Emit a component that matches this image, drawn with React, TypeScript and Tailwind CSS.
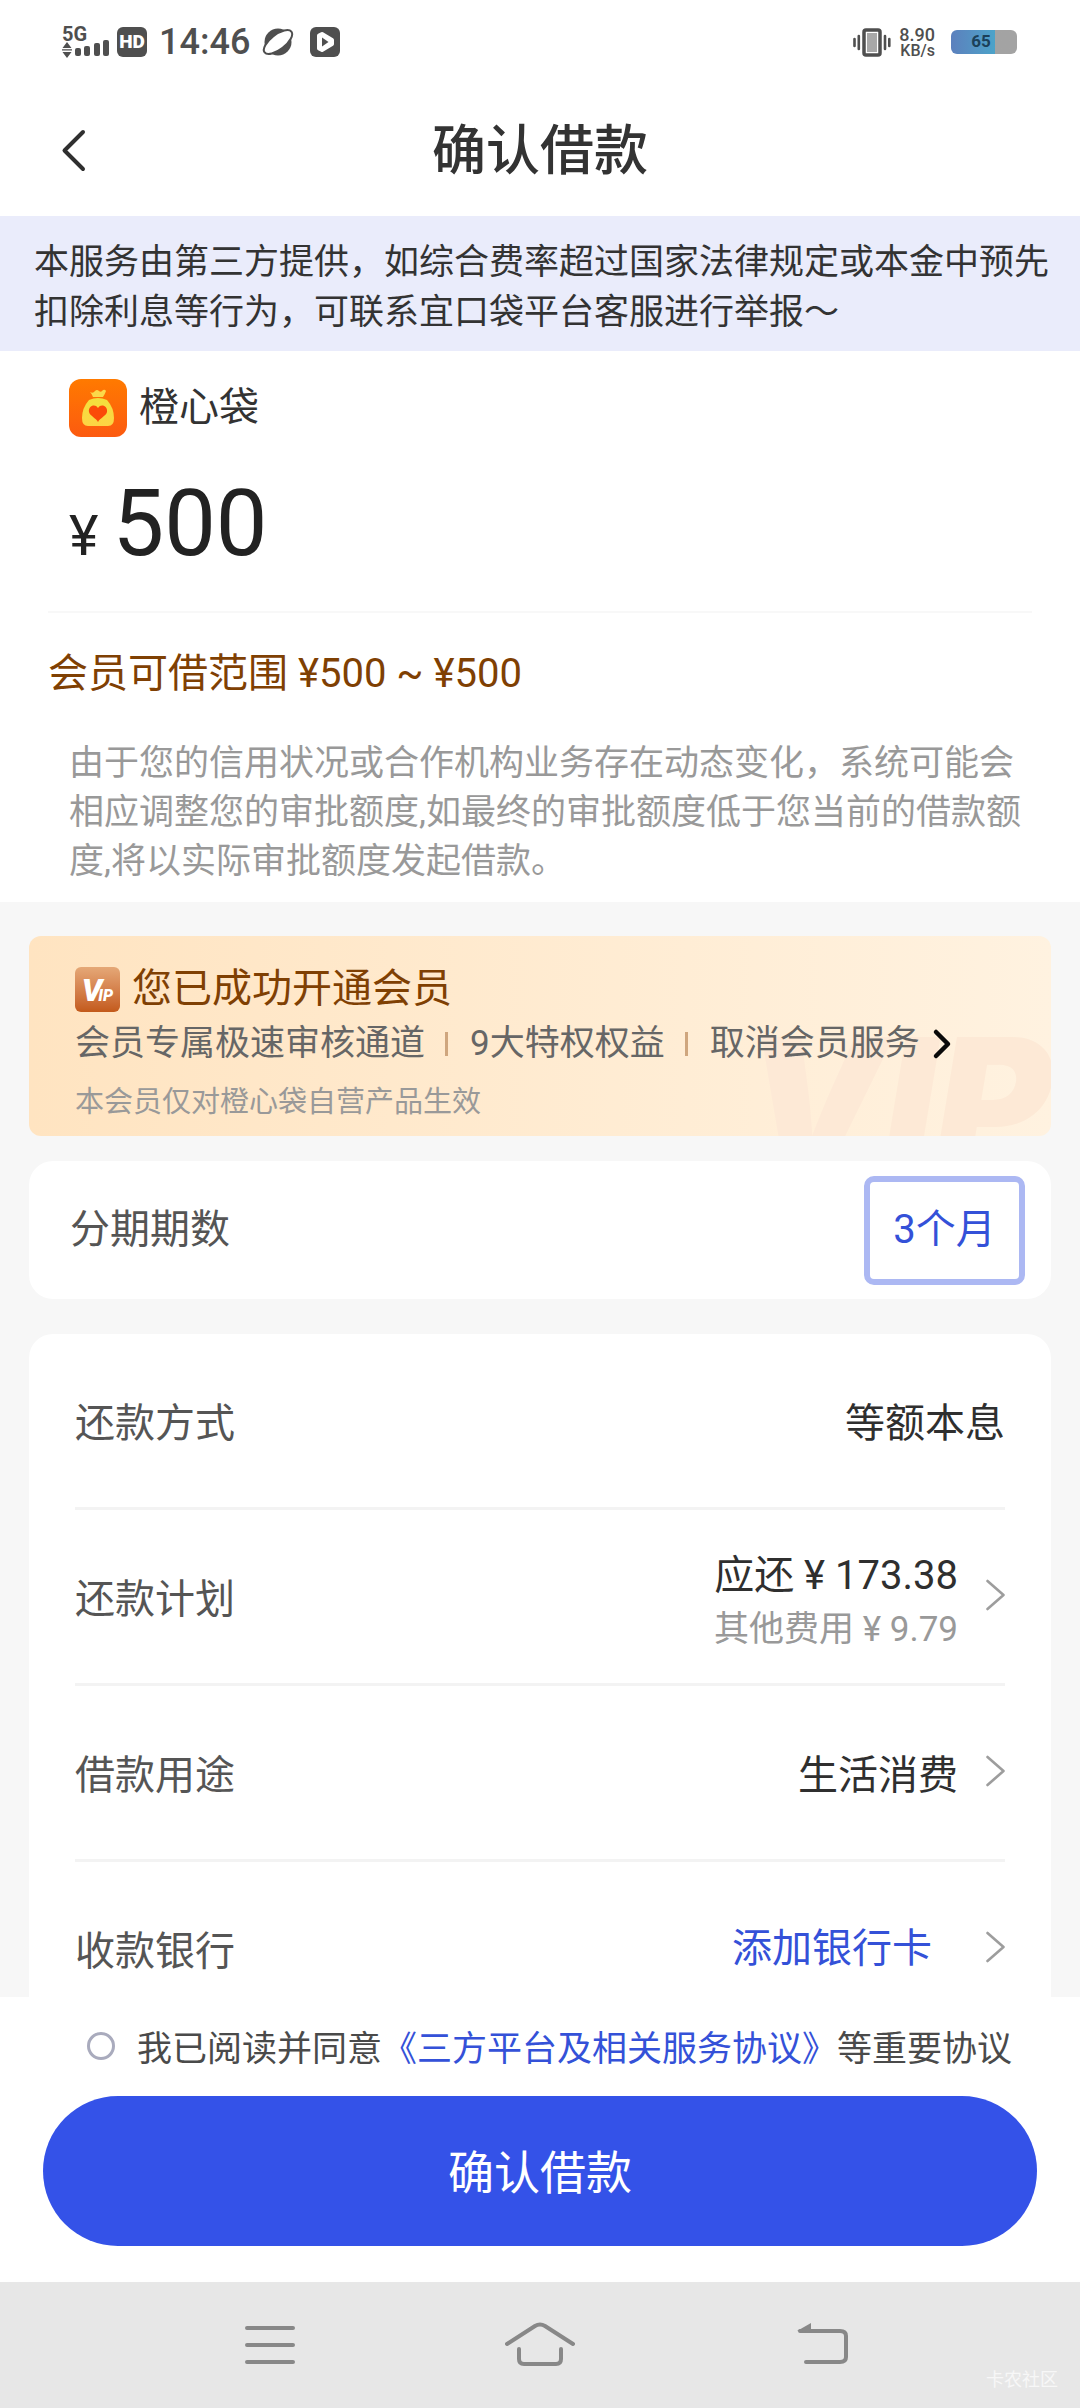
import { ReactNode, useState } from "react";

const StatusBar = () => {
  return (
    <div className="flex h-[84px] items-center justify-between pl-[62px] pr-[63px] font-medium text-[#4f4f4f]">
      <div className="flex items-center">
        <div className="flex w-[49px] flex-col">
          <span className="h-4 text-[20px] font-bold leading-4">5G</span>
          <svg className="h-4 w-12 overflow-visible" viewBox="0 0 48 16" fill="currentColor">
            <path d="M5 0l4.500 6h-9zM5 16l4.500-6h-9zM0 7.200h10v1.400h-10z" />
            <rect x="13" y="6" width="6" height="8" rx="2" />
            <rect x="22" y="4" width="6" height="10" rx="2" />
            <rect x="32" y="1" width="6" height="13" rx="2" />
            <rect x="41" y="-2" width="6" height="16" rx="2" />
          </svg>
        </div>
        <span className="ml-1.5 flex size-[30px] items-center justify-center rounded-md bg-[#4f4f4f] text-[19px] font-black text-white">
          HD
        </span>
        <span className="ml-3 text-[36px] leading-10">14:46</span>
        <svg className="ml-3 size-8 overflow-visible" viewBox="0 0 32 32">
          <circle cx="16" cy="16" r="13.500" fill="#4f4f4f" />
          <ellipse
            cx="16"
            cy="16"
            rx="17"
            ry="7.500"
            transform="rotate(-38 16 16)"
            fill="#fff"
            stroke="#4f4f4f"
            strokeWidth="2"
          />
        </svg>
        <svg className="ml-4 size-[30px]" viewBox="0 0 30 30">
          <rect width="30" height="30" rx="6" fill="#4f4f4f" />
          <path
            d="M9 8.500l3-1.500 10 6v4l-10 6-3-1.500z"
            fill="#fff"
            stroke="#fff"
            strokeWidth="4"
            strokeLinejoin="round"
          />
          <path d="M12 10.500l6.500 4.500-6.500 4.500z" fill="#4f4f4f" />
        </svg>
      </div>
      <div className="flex items-center">
        <svg className="h-[30px] w-[38px]" viewBox="0 0 38 30">
          <rect x="11" y="3" width="16" height="25" rx="2" fill="#fff" stroke="#4f4f4f" strokeWidth="3.500" />
          <rect x="14" y="6" width="10" height="19" fill="#a8a8a8" />
          <path
            d="M1.500 12v7M5.800 9v13M32 9v13M36.300 12v7"
            stroke="#4f4f4f"
            strokeWidth="2.600"
            strokeLinecap="round"
          />
        </svg>
        <div className="ml-2 flex flex-col items-end pt-0.5">
          <span className="text-[18px] leading-4">8.90</span>
          <span className="text-[16px] leading-4">KB/s</span>
        </div>
        <div className="ml-4 flex h-6 w-[66px] items-center justify-center rounded-md bg-linear-to-r from-[#5b80bd] from-0% via-[#4ba3c9] via-67% to-[#a3a3a3] to-67% pr-1.5 text-[17px] font-bold text-[#1b4059]">
          65
        </div>
      </div>
    </div>
  );
};

const Header = () => {
  return (
    <header className="grid h-[132px] grid-cols-3 items-center px-[60px]">
      <button className="w-fit" aria-label="返回">
        <svg className="h-11 w-7" viewBox="0 0 28 44" fill="none">
          <path
            d="M23 4L4.500 22.500L23 41"
            stroke="#2f2f2f"
            strokeWidth="4"
            strokeLinecap="round"
            strokeLinejoin="round"
          />
        </svg>
      </button>
      <h1 className="whitespace-nowrap pt-1 text-center text-[54px] font-medium leading-[64px] text-[#333333]">
        确认借款
      </h1>
    </header>
  );
};

const AppLogo = () => {
  return (
    <svg className="size-[58px]" viewBox="0 0 58 58">
      <defs>
        <linearGradient id="logo-bg" x1="0" y1="0" x2="0" y2="1">
          <stop offset="0" stopColor="#ff7a00" />
          <stop offset="1" stopColor="#fc5a10" />
        </linearGradient>
        <linearGradient id="logo-bag" x1="0" y1="0" x2="0" y2="1">
          <stop offset="0" stopColor="#f3e03c" />
          <stop offset="1" stopColor="#fdd444" />
        </linearGradient>
      </defs>
      <rect width="58" height="58" rx="12" fill="url(#logo-bg)" />
      <path
        d="M21 13q3 2 5-1 2-2 4 0 2 2 4-1 2-1 3 1-1 3-3 6H24q-1-3-3-5z"
        fill="#fbd94a"
      />
      <path
        d="M20 21Q29 17 38 21Q45 29 45 39Q45 47 39 47H19Q13 47 13 39Q13 29 20 21z"
        fill="url(#logo-bag)"
      />
      <path
        d="M29 29C26 24 19 27 20 33C21 37 27 39 29 43C31 39 37 37 38 33C39 27 32 24 29 29z"
        fill="#fb4a08"
      />
    </svg>
  );
};

const VipBadge = () => {
  return (
    <span className="flex size-[45px] items-baseline justify-center rounded-md bg-linear-to-b from-[#e5a877] to-[#c35a1a] font-black italic text-white">
      <span className="text-[32px] leading-[46px]">V</span>
      <span className="-ml-1 text-[16px]">IP</span>
    </span>
  );
};

const Separator = () => <span className="ml-5 mr-[22px] h-6 w-[3px] bg-[#cfa67e]" />;

const VipCard = () => {
  return (
    <section className="relative flex h-[200px] flex-col overflow-hidden rounded-xl bg-linear-to-r from-[#ffe4c1] to-[#fff2e0] pl-[46px] pt-7">
      <span
        className="absolute right-0 top-[77px] font-[Inter,sans-serif] text-[176px] font-black italic leading-[176px] text-[#fde9d6]"
        aria-hidden="true"
      >
        VIP
      </span>
      <div className="relative flex h-[50px] items-center gap-3">
        <VipBadge />
        <h2 className="text-[40px] leading-[50px] text-[#7f4003]">您已成功开通会员</h2>
      </div>
      <div className="relative flex h-[60px] items-center text-[35px] leading-[50px] text-[#666666]">
        <span>会员专属极速审核通道</span>
        <Separator />
        <span>9大特权权益</span>
        <Separator />
        <button className="flex items-center gap-3">
          取消会员服务
          <svg className="h-8 w-5" viewBox="0 0 20 32" fill="none">
            <path
              d="M4 4L16 16L4 28"
              stroke="#0a0a0a"
              strokeWidth="4.500"
              strokeLinecap="round"
              strokeLinejoin="round"
            />
          </svg>
        </button>
      </div>
      <p className="relative pt-2 text-[29px] leading-[40px] text-[#999999]">
        本会员仅对橙心袋自营产品生效
      </p>
    </section>
  );
};

const Chevron = () => {
  return (
    <svg className="mb-1 ml-7 h-8 w-[19px]" viewBox="0 0 19 32" fill="none">
      <path
        d="M1.500 2L17.500 16L1.500 30"
        stroke="#9d9d9d"
        strokeWidth="2.600"
        strokeLinecap="round"
        strokeLinejoin="round"
      />
    </svg>
  );
};

type RowProps = {
  label: string;
  arrow?: boolean;
  children: ReactNode;
};

const Row = ({ label, arrow, children }: RowProps) => {
  const content = (
    <>
      <span className="pt-1.5 text-[#555555]">{label}</span>
      <span className="flex items-center text-right text-[#2f2f2f]">
        {children}
        {arrow && <Chevron />}
      </span>
    </>
  );

  return (
    <li className="border-b-3 border-[#f3f3f3] text-[40px] leading-[54px] last:border-b-0">
      {arrow ? (
        <button className="flex h-[173px] w-full items-center justify-between">{content}</button>
      ) : (
        <div className="flex h-[173px] items-center justify-between">{content}</div>
      )}
    </li>
  );
};

const NavigationBar = () => {
  return (
    <nav className="relative grid h-[126px] grid-cols-[270px_270px_270px] items-center justify-center bg-[#e7e7e7]">
      <button className="flex justify-center" aria-label="菜单">
        <svg className="h-[46px] w-[50px]" viewBox="0 0 50 46" stroke="#888888" strokeWidth="4" strokeLinecap="round">
          <path d="M2 6h46M2 23h46M2 40h46" />
        </svg>
      </button>
      <button className="flex justify-center" aria-label="主页">
        <svg
          className="h-[46px] w-[70px]"
          viewBox="0 0 70 46"
          fill="none"
          stroke="#888888"
          strokeWidth="4"
          strokeLinecap="round"
          strokeLinejoin="round"
        >
          <path d="M2 22L30 4Q35 1 40 4L68 22M14 27v10q0 5 5 5h32q5 0 5-5v-10" />
        </svg>
      </button>
      <button className="flex justify-center" aria-label="后退">
        <svg
          className="h-[46px] w-[76px]"
          viewBox="0 0 76 46"
          fill="none"
          stroke="#888888"
          strokeWidth="4"
          strokeLinecap="round"
        >
          <path d="M28 9h40q6 0 6 5v21q0 5-6 5H34" />
          <path d="M25 9L39 1v9z" fill="#888888" stroke="none" />
        </svg>
      </button>
      <span className="absolute bottom-4 right-[22px] text-[18px] leading-6 text-[#f7f7f7]">
        卡农社区
      </span>
    </nav>
  );
};

const App = () => {
  const [agreed, setAgreed] = useState(false);

  return (
    <div className="flex h-screen flex-col bg-white font-[Roboto,'Noto_Sans_CJK_SC',sans-serif]">
      <StatusBar />
      <Header />
      <main className="min-h-0 flex-1 overflow-y-auto bg-[#f7f7f7] [scrollbar-width:none]">
        <p className="bg-[#eaecfb] pb-[13px] pl-[34px] pr-6 pt-[22px] text-[35px] leading-[50px] text-[#333333]">
          本服务由第三方提供，如综合费率超过国家法律规定或本金中预先扣除利息等行为，可联系宜口袋平台客服进行举报～
        </p>

        <section className="bg-white px-12 pb-4 pt-7">
          <div className="flex items-center gap-3 pl-[21px]">
            <AppLogo />
            <span className="text-[40px] leading-[58px] text-[#333333]">橙心袋</span>
          </div>
          <div className="flex h-[174px] items-baseline gap-3.5 pl-[21px] pt-8 text-[#222222]">
            <span className="text-[56px]">¥</span>
            <span className="text-[92px] leading-[110px]">500</span>
          </div>
          <p className="border-t-2 border-[#f8f8f8] pt-[34px] text-[40px] leading-[54px] text-[#7f4003]">
            会员可借范围 ¥500 ~ ¥500
          </p>
          <p className="pl-[21px] pt-[38px] text-[35px] leading-[49px] text-[#999999]">
            由于您的信用状况或合作机构业务存在动态变化，系统可能会相应调整您的审批额度,如最终的审批额度低于您当前的借款额度,将以实际审批额度发起借款。
          </p>
        </section>

        <div className="px-[29px] pt-[34px]">
          <VipCard />

          <section className="mt-[25px] flex h-[138px] items-center justify-between rounded-3xl bg-white pl-[41px] pr-[26px] text-[40px] leading-[54px]">
            <span className="text-[#555555]">分期期数</span>
            <button className="h-[109px] w-[161px] rounded-[10px] border-6 border-[#acb8f3] text-[#3451d8]">
              3个月
            </button>
          </section>

          <ul className="mt-[35px] rounded-3xl bg-white px-[46px]">
            <Row label="还款方式">
              <span className="pt-1.5">等额本息</span>
            </Row>
            <Row label="还款计划" arrow>
              <span className="flex flex-col pt-3">
                <span>应还 ¥ 173.38</span>
                <span className="text-[35px] text-[#999999]">其他费用 ¥ 9.79</span>
              </span>
            </Row>
            <Row label="借款用途" arrow>
              <span className="pt-1.5">生活消费</span>
            </Row>
            <Row label="收款银行" arrow>
              <span className="pr-[26px] text-[#3451d8]">添加银行卡</span>
            </Row>
          </ul>
        </div>
      </main>

      <footer className="bg-white px-[43px] pb-9 pt-6">
        <div className="flex items-center pl-11 text-[35px] leading-[50px] text-[#4a4a4a]">
          <input
            id="agree"
            type="checkbox"
            className="mb-1 size-7 appearance-none rounded-full border-3 border-[#a9abbd] checked:bg-[#3451e8]"
            checked={agreed}
            onChange={(e) => setAgreed(e.target.checked)}
          />
          <label className="whitespace-nowrap pl-[22px] pt-1" htmlFor="agree">
            我已阅读并同意
            <a className="text-[#3451d8]" href="#agreement">
              《三方平台及相关服务协议》
            </a>
            等重要协议
          </label>
        </div>
        <button className="mt-[21px] h-[150px] w-full rounded-full bg-[#3452e8] pt-1 text-[46px] text-white">
          确认借款
        </button>
      </footer>
      <NavigationBar />
    </div>
  );
};

export default App;
